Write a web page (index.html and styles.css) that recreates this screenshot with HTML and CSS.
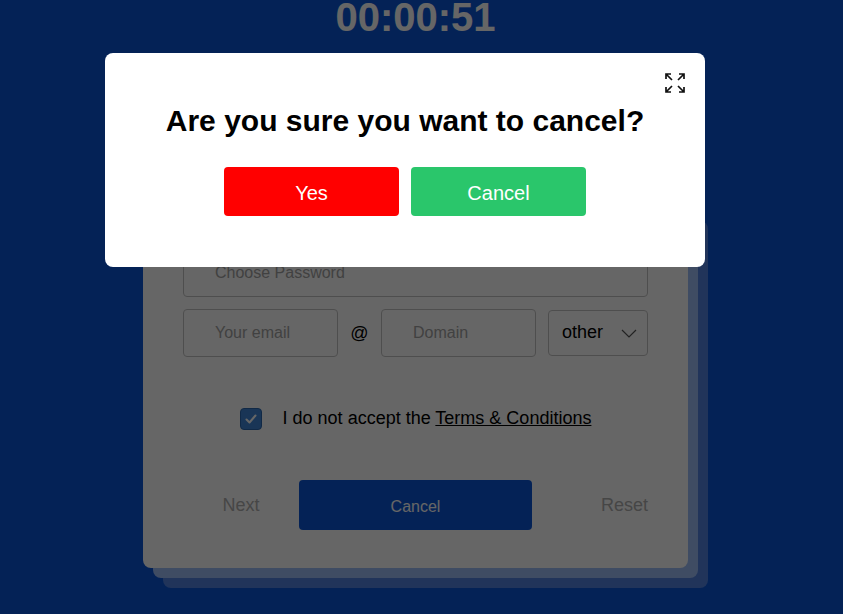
FILE: index.html
```html
<!DOCTYPE html>
<html lang="en">
<head>
<meta charset="utf-8">
<title>Cancel confirmation</title>
<link rel="stylesheet" href="styles.css">
</head>
<body>
<div class="page">
  <div class="timer">00:00:51</div>
  <form class="card">
    <input class="field field-full" type="password" placeholder="Choose Password">
    <div class="email-row">
      <input class="field field-half" type="text" placeholder="Your email">
      <span class="at">@</span>
      <input class="field field-half" type="text" placeholder="Domain">
      <div class="select">
        <span>other</span>
        <svg class="chev" width="16" height="9" viewBox="0 0 16 9"><polyline points="1,1 8,8 15,1" fill="none" stroke="#555" stroke-width="1.2"/></svg>
      </div>
    </div>
    <label class="terms">
      <span class="check">
        <svg width="14" height="14" viewBox="0 0 14 14"><polyline points="2.5,7.5 5.5,10.5 11.5,3.5" fill="none" stroke="#fff" stroke-width="2" stroke-linecap="round" stroke-linejoin="round"/></svg>
      </span>
      <span>I do not accept the <a class="link">Terms &amp; Conditions</a></span>
    </label>
    <div class="actions">
      <span class="ghost">Next</span>
      <span class="primary">Cancel</span>
      <span class="ghost reset">Reset</span>
    </div>
  </form>
</div>
<div class="overlay"></div>
<div class="modal">
  <svg class="expand" width="22" height="22" viewBox="0 0 22 22" fill="none" stroke="#111" stroke-width="1.7">
    <path d="M8 8L2 2M2 7V2H7"/>
    <path d="M14 8L20 2M15 2H20V7"/>
    <path d="M8 14L2 20M2 15V20H7"/>
    <path d="M14 14L20 20M20 15V20H15"/>
  </svg>
  <h2 class="modal-title">Are you sure you want to cancel?</h2>
  <div class="modal-buttons">
    <button class="mbtn yes" type="button">Yes</button>
    <button class="mbtn no" type="button">Cancel</button>
  </div>
</div>
</body>
</html>
```

FILE: styles.css
```css
html, body {
  margin: 0;
  height: 100%;
  overflow: hidden;
}
body {
  background: #0c56d8;
  font-family: "Liberation Sans", Arial, sans-serif;
}
.page {
  padding-left: 143px;
  width: 545px;
}
.timer {
  margin-top: -3px;
  height: 40px;
  line-height: 40px;
  text-align: center;
  color: #fff;
  font-size: 40px;
  font-weight: bold;
}
.card {
  margin: 164px 0 0;
  width: 545px;
  box-sizing: border-box;
  padding: 48px 40px 38px;
  background: #fff;
  border-radius: 8px;
  box-shadow: 10px 10px 0 #9ebef8, 20px 20px 0 #5383e2;
}
.field {
  box-sizing: border-box;
  height: 48px;
  border: 1px solid #c4c4c4;
  border-radius: 4px;
  padding: 0 0 0 31px;
  font: 16px "Liberation Sans", Arial, sans-serif;
  background: #fff;
  display: block;
}
.field::placeholder {
  color: #a4a4a4;
}
.field-full {
  width: 465px;
}
.email-row {
  display: flex;
  align-items: center;
  margin-top: 12px;
}
.field-half {
  width: 155px;
}
.at {
  width: 43px;
  text-align: center;
  font-size: 18px;
  color: #000;
}
.select {
  margin-left: 12px;
  box-sizing: border-box;
  width: 100px;
  height: 46px;
  border: 1px solid #c4c4c4;
  border-radius: 4px;
  display: flex;
  align-items: center;
  justify-content: space-between;
  padding: 0 10px 2px 13px;
  font-size: 18px;
  color: #000;
}
.chev {
  display: block;
  margin-top: 3px;
}
.terms {
  display: flex;
  align-items: center;
  justify-content: center;
  gap: 21px;
  margin-top: 51px;
  font-size: 18px;
  color: #000;
}
.terms > span:last-child {
  margin-top: -2px;
}
.check {
  width: 22px;
  height: 22px;
  box-sizing: border-box;
  border-radius: 4px;
  background: #3f86d8;
  border: 1px solid #2c68ae;
  display: flex;
  align-items: center;
  justify-content: center;
}
.check svg {
  display: block;
}
.link {
  color: #000;
  text-decoration: underline;
}
.actions {
  display: flex;
  align-items: center;
  margin-top: 50px;
  height: 50px;
}
.ghost {
  width: 116px;
  text-align: center;
  font-size: 18px;
  color: #b0b0b0;
}
.reset {
  flex: 1;
  text-align: right;
}
.primary {
  width: 233px;
  height: 50px;
  border-radius: 4px;
  background: #0c56d8;
  color: #fff;
  font-size: 16px;
  display: flex;
  align-items: center;
  justify-content: center;
  padding-top: 4px;
  box-sizing: border-box;
}
.overlay {
  position: fixed;
  inset: 0;
  background: rgba(0, 0, 0, 0.6);
}
.modal {
  position: fixed;
  left: 105px;
  top: 53px;
  width: 600px;
  height: 214px;
  box-sizing: border-box;
  background: #fff;
  border-radius: 8px;
  padding-top: 50px;
}
.expand {
  position: absolute;
  top: 19px;
  right: 19px;
}
.modal-title {
  margin: 0;
  text-align: center;
  font-size: 30px;
  line-height: 36px;
  font-weight: bold;
  color: #000;
}
.modal-buttons {
  display: flex;
  justify-content: center;
  gap: 12px;
  margin-top: 28px;
}
.mbtn {
  width: 175px;
  height: 49px;
  border: 0;
  border-radius: 4px;
  color: #fff;
  font: 20px "Liberation Sans", Arial, sans-serif;
  padding: 3px 0 0;
  cursor: pointer;
}
.yes {
  background: #ff0000;
}
.no {
  background: #2ac66b;
}
```
